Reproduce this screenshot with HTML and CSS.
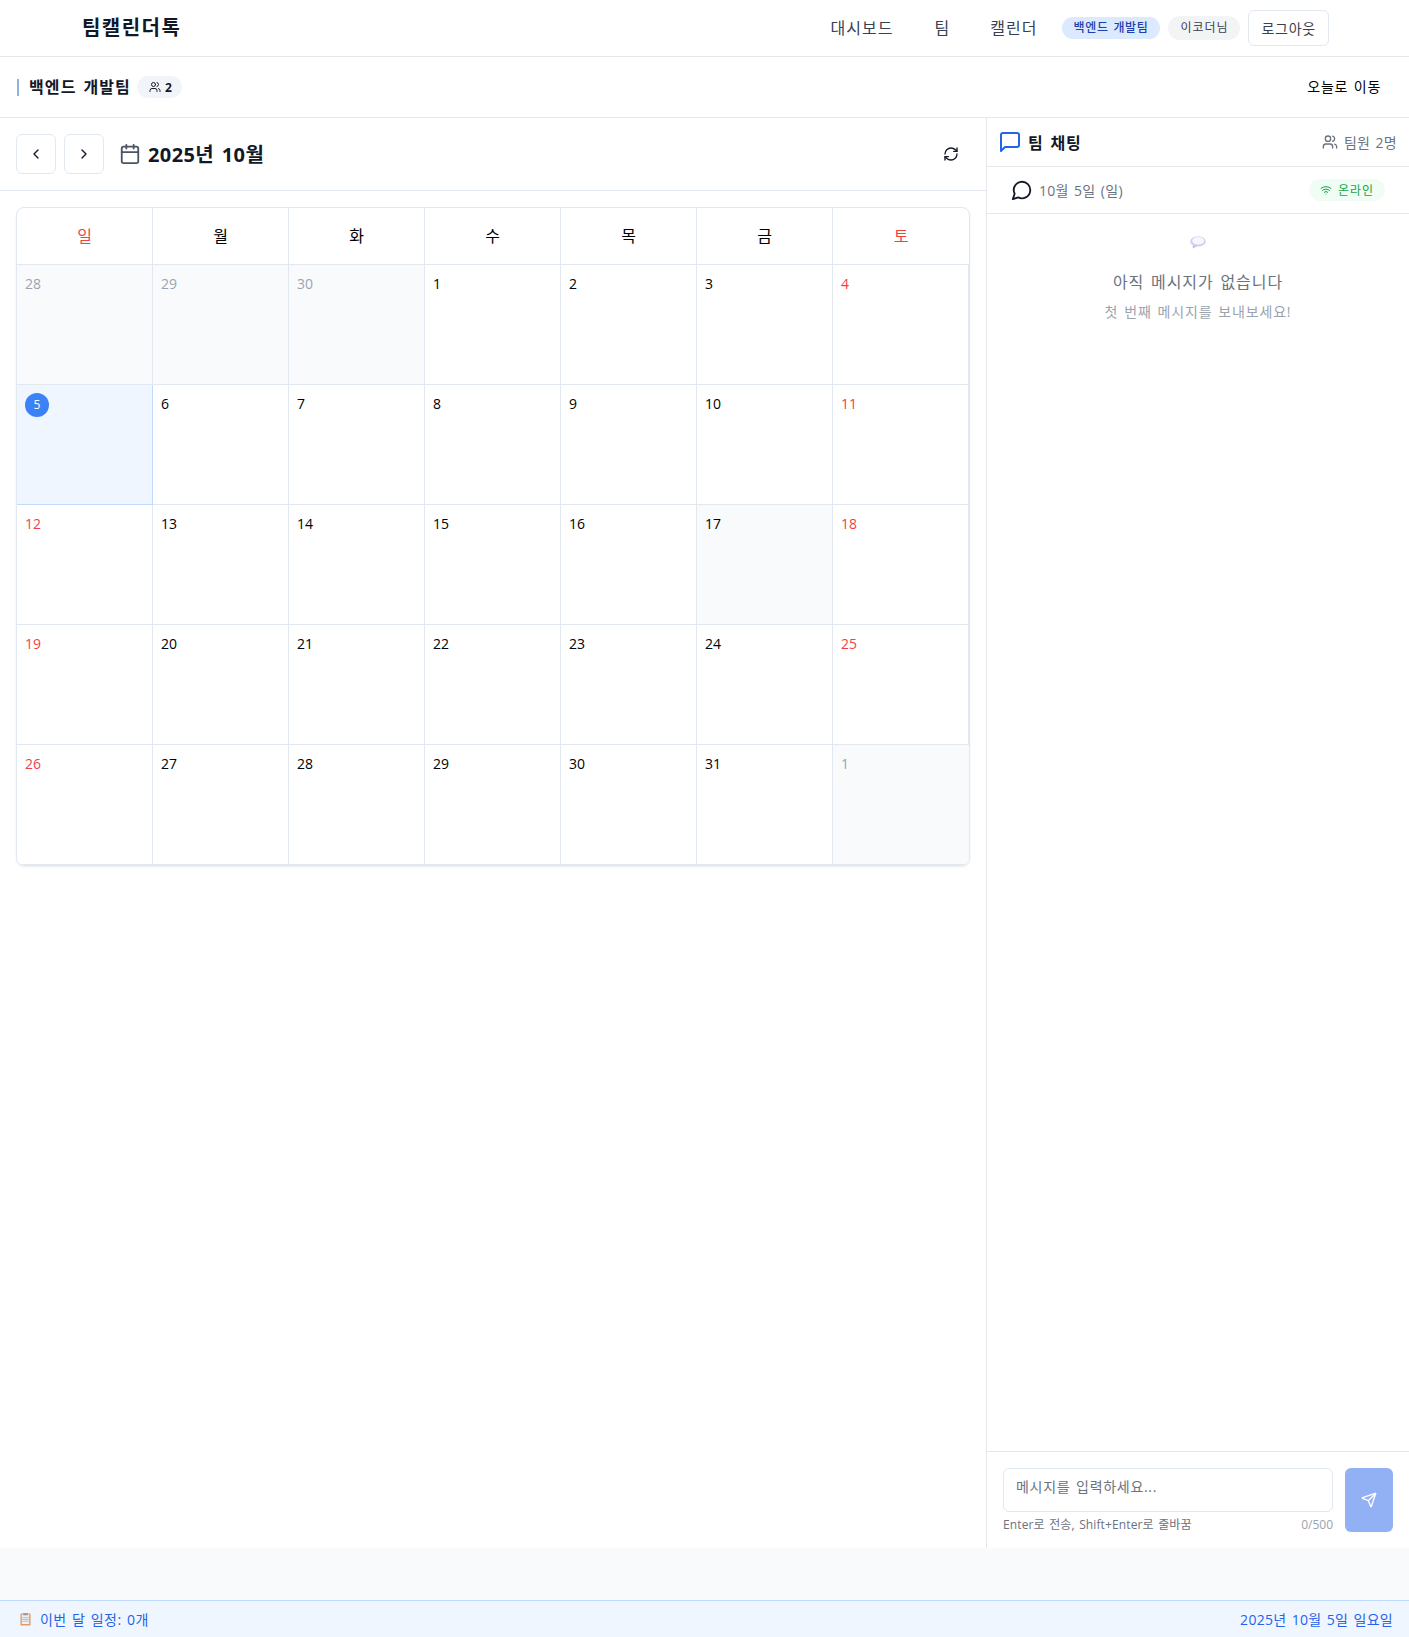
FILE: index.html
```html
<!DOCTYPE html>
<html lang="ko">
<head>
    <meta charset="UTF-8">
    <meta name="viewport" content="width=device-width, initial-scale=1.0">
    <title>팀캘린더톡</title>
    <link rel="stylesheet" href="styles.css">
</head>
<body>
    <header class="top-nav">
        <div class="logo">팀캘린더톡</div>
        <nav class="nav-links">
            <a class="nav-link">대시보드</a>
            <a class="nav-link">팀</a>
            <a class="nav-link">캘린더</a>
            <span class="team-pill">백엔드 개발팀</span>
            <span class="user-pill">이코더님</span>
            <button class="logout-btn">로그아웃</button>
        </nav>
    </header>

    <div class="team-bar">
        <div class="team-info">
            <span class="team-mark"></span>
            <span class="team-name">백엔드 개발팀</span>
            <span class="member-badge">
                <svg class="icon-12" viewBox="0 0 24 24"><path d="M16 21v-2a4 4 0 0 0-4-4H6a4 4 0 0 0-4 4v2"/><circle cx="9" cy="7" r="4"/><path d="M22 21v-2a4 4 0 0 0-3-3.87"/><path d="M16 3.13a4 4 0 0 1 0 7.75"/></svg>
                2
            </span>
        </div>
        <button class="today-btn">오늘로 이동</button>
    </div>

    <main class="content">
        <section class="calendar-pane">
            <div class="calendar-head">
                <button class="nav-btn"><svg class="icon-16" viewBox="0 0 24 24"><path d="m15 18-6-6 6-6"/></svg></button>
                <button class="nav-btn"><svg class="icon-16" viewBox="0 0 24 24"><path d="m9 18 6-6-6-6"/></svg></button>
                <svg class="icon-cal" viewBox="0 0 24 24"><path d="M8 2v4"/><path d="M16 2v4"/><rect x="3" y="4" width="18" height="18" rx="2"/><path d="M3 10h18"/></svg>
                <h2 class="month-title">2025년 10월</h2>
                <button class="refresh-btn"><svg class="icon-16" viewBox="0 0 24 24"><path d="M3 12a9 9 0 0 1 9-9 9.75 9.75 0 0 1 6.74 2.74L21 8"/><path d="M21 3v5h-5"/><path d="M21 12a9 9 0 0 1-9 9 9.75 9.75 0 0 1-6.74-2.74L3 16"/><path d="M8 16H3v5"/></svg></button>
            </div>
            <div class="calendar-wrap">
                <div class="calendar-grid" id="calendar-grid">
                    <div class="weekday sun">일</div>
                    <div class="weekday">월</div>
                    <div class="weekday">화</div>
                    <div class="weekday">수</div>
                    <div class="weekday">목</div>
                    <div class="weekday">금</div>
                    <div class="weekday sat">토</div>

                    <div class="day muted"><span class="num">28</span></div>
                    <div class="day muted"><span class="num">29</span></div>
                    <div class="day muted"><span class="num">30</span></div>
                    <div class="day"><span class="num">1</span></div>
                    <div class="day"><span class="num">2</span></div>
                    <div class="day"><span class="num">3</span></div>
                    <div class="day sat"><span class="num">4</span></div>

                    <div class="day today"><span class="num">5</span></div>
                    <div class="day"><span class="num">6</span></div>
                    <div class="day"><span class="num">7</span></div>
                    <div class="day"><span class="num">8</span></div>
                    <div class="day"><span class="num">9</span></div>
                    <div class="day"><span class="num">10</span></div>
                    <div class="day sat"><span class="num">11</span></div>

                    <div class="day sun"><span class="num">12</span></div>
                    <div class="day"><span class="num">13</span></div>
                    <div class="day"><span class="num">14</span></div>
                    <div class="day"><span class="num">15</span></div>
                    <div class="day"><span class="num">16</span></div>
                    <div class="day shaded"><span class="num">17</span></div>
                    <div class="day sat"><span class="num">18</span></div>

                    <div class="day sun"><span class="num">19</span></div>
                    <div class="day"><span class="num">20</span></div>
                    <div class="day"><span class="num">21</span></div>
                    <div class="day"><span class="num">22</span></div>
                    <div class="day"><span class="num">23</span></div>
                    <div class="day"><span class="num">24</span></div>
                    <div class="day sat"><span class="num">25</span></div>

                    <div class="day sun"><span class="num">26</span></div>
                    <div class="day"><span class="num">27</span></div>
                    <div class="day"><span class="num">28</span></div>
                    <div class="day"><span class="num">29</span></div>
                    <div class="day"><span class="num">30</span></div>
                    <div class="day"><span class="num">31</span></div>
                    <div class="day muted"><span class="num">1</span></div>
                </div>
            </div>
        </section>

        <aside class="chat-pane">
            <div class="chat-head">
                <div class="chat-title">
                    <svg class="icon-chat" viewBox="0 0 24 24"><path d="M21 15a2 2 0 0 1-2 2H7l-4 4V5a2 2 0 0 1 2-2h14a2 2 0 0 1 2 2z"/></svg>
                    <span>팀 채팅</span>
                </div>
                <div class="chat-members">
                    <svg class="icon-16" viewBox="0 0 24 24"><path d="M16 21v-2a4 4 0 0 0-4-4H6a4 4 0 0 0-4 4v2"/><circle cx="9" cy="7" r="4"/><path d="M22 21v-2a4 4 0 0 0-3-3.87"/><path d="M16 3.13a4 4 0 0 1 0 7.75"/></svg>
                    <span>팀원 2명</span>
                </div>
            </div>
            <div class="chat-date">
                <div class="chat-date-left">
                    <svg class="icon-bubble" viewBox="0 0 24 24"><path d="M7.9 20A9 9 0 1 0 4 16.1L2 22Z"/></svg>
                    <span>10월 5일 (일)</span>
                </div>
                <span class="online-pill">
                    <svg class="icon-12" viewBox="0 0 24 24"><path d="M12 20h.01"/><path d="M2 8.82a15 15 0 0 1 20 0"/><path d="M5 12.859a10 10 0 0 1 14 0"/><path d="M8.5 16.429a5 5 0 0 1 7 0"/></svg>
                    온라인
                </span>
            </div>
            <div class="chat-body">
                <svg class="bubble-emoji" viewBox="0 0 16 13"><path d="M3 8.5 2.6 12.6 7.5 10Z" fill="#c4b8e4"/><ellipse cx="8" cy="5.4" rx="7.8" ry="5.2" fill="#d6cdf0"/><ellipse cx="8.2" cy="4.8" rx="6" ry="3.7" fill="#f8f6fd"/></svg>
                <p class="empty-title">아직 메시지가 없습니다</p>
                <p class="empty-sub">첫 번째 메시지를 보내보세요!</p>
            </div>
            <div class="chat-input">
                <div class="input-col">
                    <textarea class="msg-box" placeholder="메시지를 입력하세요..."></textarea>
                    <div class="input-hints">
                        <span class="hint">Enter로 전송, Shift+Enter로 줄바꿈</span>
                        <span class="count">0/500</span>
                    </div>
                </div>
                <button class="send-btn"><svg class="icon-16" viewBox="0 0 24 24"><path d="M14.536 21.686a.5.5 0 0 0 .937-.024l6.5-19a.496.496 0 0 0-.635-.635l-19 6.5a.5.5 0 0 0-.024.937l7.93 3.18a2 2 0 0 1 1.112 1.11z"/><path d="m21.854 2.147-10.94 10.939"/></svg></button>
            </div>
        </aside>
    </main>

    <div class="page-gap"></div>

    <footer class="status-bar">
        <div class="status-left">
            <svg class="clipboard" viewBox="0 0 12 14"><rect x="0.5" y="1" width="11" height="13" rx="1" fill="#dd9a63"/><rect x="2" y="2" width="8" height="10.5" fill="#eef0f5"/><rect x="3.5" y="0.5" width="5" height="2.5" fill="#9a9aa8"/><path d="M3 5.5h6M3 7.5h6M3 9.5h6" stroke="#b6b8c6" stroke-width="1"/></svg>
            <span>이번 달 일정: 0개</span>
        </div>
        <span class="status-date">2025년 10월 5일 일요일</span>
    </footer>
</body>
</html>
```

FILE: styles.css
```css
* {
    box-sizing: border-box;
    word-spacing: 0.1em;
}

body {
    margin: 0;
    height: 100vh;
    display: flex;
    flex-direction: column;
    background: #f9fafb;
    color: #000;
    font-family: "Open Sans", "Noto Sans CJK KR", sans-serif;
    font-size: 14px;
}

button {
    font-family: inherit;
    background: #fff;
    cursor: pointer;
}

svg {
    fill: none;
    stroke: currentColor;
    stroke-width: 2;
    stroke-linecap: round;
    stroke-linejoin: round;
    flex-shrink: 0;
    display: block;
}

.icon-12 { width: 12px; height: 12px; }
.icon-16 { width: 16px; height: 16px; }

/* top nav */
.top-nav {
    height: 57px;
    flex-shrink: 0;
    display: flex;
    align-items: center;
    justify-content: space-between;
    padding: 0 80px 0 82px;
    background: #fff;
    border-bottom: 1px solid #e5e7eb;
}

.logo {
    font-size: 20px;
    font-weight: 700;
    letter-spacing: 0.073em;
    color: #111827;
    padding-bottom: 3px;
}

.nav-links {
    display: flex;
    align-items: center;
}

.nav-link {
    font-size: 16px;
    letter-spacing: 0.065em;
    color: #374151;
    margin-right: 41px;
    padding-bottom: 2px;
}

.nav-link:nth-child(2) {
    margin-right: 40px;
}

.nav-link:nth-child(3) {
    margin-right: 24px;
}

.team-pill {
    height: 22px;
    padding: 0 12px;
    border-radius: 11px;
    background: #dbeafe;
    color: #1e40af;
    font-size: 12px;
    font-weight: 500;
    letter-spacing: 0.05em;
    line-height: 22px;
    margin-right: 8px;
}

.user-pill {
    height: 24px;
    padding: 0 12px;
    border-radius: 12px;
    background: #f3f4f6;
    color: #374151;
    font-size: 12px;
    letter-spacing: 0.08em;
    line-height: 24px;
    margin-right: 8px;
}

.logout-btn {
    height: 36px;
    padding: 0 12px;
    border: 1px solid #e2e8f0;
    border-radius: 6px;
    color: #374151;
    font-size: 14px;
    letter-spacing: 0.055em;
}

/* team bar */
.team-bar {
    height: 61px;
    flex-shrink: 0;
    display: flex;
    align-items: center;
    justify-content: space-between;
    padding: 0 28px 0 17px;
    background: #fff;
    border-bottom: 1px solid #e5e7eb;
}

.team-info {
    display: flex;
    align-items: center;
}

.team-mark {
    width: 2px;
    height: 17px;
    background: linear-gradient(to right, #c9a98c 50%, #8fb0e0 50%);
    margin-right: 10px;
}

.team-name {
    font-size: 16px;
    font-weight: 700;
    letter-spacing: 0.07em;
    color: #111827;
    margin-right: 6px;
    padding-bottom: 2px;
}

.member-badge {
    display: flex;
    align-items: center;
    gap: 4px;
    height: 22px;
    padding: 0 10px 0 12px;
    border-radius: 11px;
    background: #f1f5f9;
    font-size: 12px;
    font-weight: 700;
    color: #111827;
}

.today-btn {
    border: 0;
    padding: 0 0 2px;
    font-size: 14px;
    letter-spacing: 0.05em;
    color: #000;
}

/* main area */
.content {
    height: 1430px;
    flex-shrink: 0;
    display: flex;
    background: #fff;
}

.calendar-pane {
    flex: 1;
    min-width: 0;
}

.calendar-head {
    height: 73px;
    display: flex;
    align-items: center;
    padding: 0 27px 0 16px;
    border-bottom: 1px solid #e2e8f0;
}

.nav-btn {
    width: 40px;
    height: 40px;
    display: flex;
    align-items: center;
    justify-content: center;
    padding: 0;
    margin-right: 8px;
    border: 1px solid #e2e8f0;
    border-radius: 6px;
    color: #111827;
}

.icon-cal {
    width: 22px;
    height: 22px;
    margin: 0 7px;
    color: #4b5563;
}

.month-title {
    margin: 0;
    padding-bottom: 2px;
    font-size: 20px;
    font-weight: 700;
    letter-spacing: 0.02em;
    color: #111827;
}

.refresh-btn {
    margin-left: auto;
    border: 0;
    padding: 0;
    color: #111827;
}

.calendar-wrap {
    padding: 16px 16px 0;
}

.calendar-grid {
    display: grid;
    grid-template-columns: repeat(7, 136px);
    grid-template-rows: 57px repeat(5, 120px);
    width: 954px;
    border: 1px solid #e2e8f0;
    border-radius: 8px;
    box-shadow: 0 1px 2px rgba(0, 0, 0, 0.08);
    overflow: hidden;
}

.weekday {
    display: flex;
    align-items: center;
    justify-content: center;
    padding-bottom: 2px;
    font-size: 16px;
    border-right: 1px solid #e2e8f0;
    border-bottom: 1px solid #e2e8f0;
}

.weekday.sun { color: #ef4444; }
.weekday.sat { color: #f43f3f; border-right: 0; }

.day {
    padding: 8px;
    border-right: 1px solid #e2e8f0;
    border-bottom: 1px solid #e2e8f0;
    font-size: 14px;
    line-height: 22px;
}

.day:last-child {
    border-right: 0;
}

.day.sun { color: #ef4444; }
.day.sat { color: #f43f3f; }
.day.muted { background: #f9fafb; color: #9ca3af; }
.day.shaded { background: #f9fafb; }

.day.today {
    background: #eff6ff;
    border-color: #bfdbfe;
}

.day.today .num {
    display: flex;
    align-items: center;
    justify-content: center;
    width: 24px;
    height: 24px;
    border-radius: 50%;
    background: #3b82f6;
    color: #fff;
    font-size: 12px;
}

/* chat */
.chat-pane {
    width: 423px;
    flex-shrink: 0;
    display: flex;
    flex-direction: column;
    border-left: 1px solid #e5e7eb;
}

.chat-head {
    height: 49px;
    display: flex;
    align-items: center;
    justify-content: space-between;
    padding: 0 12px 0 11px;
    border-bottom: 1px solid #e5e7eb;
}

.chat-title {
    display: flex;
    align-items: center;
    gap: 6px;
    font-size: 16px;
    font-weight: 700;
    letter-spacing: 0.06em;
    color: #111827;
}

.chat-title span {
    padding-bottom: 1px;
}

.icon-chat {
    width: 24px;
    height: 24px;
    color: #2563eb;
}

.chat-members {
    display: flex;
    align-items: center;
    gap: 6px;
    color: #6b7280;
    font-size: 14px;
    letter-spacing: 0.02em;
}

.chat-date {
    height: 47px;
    display: flex;
    align-items: center;
    justify-content: space-between;
    padding: 0 24px;
    border-bottom: 1px solid #e5e7eb;
}

.chat-date-left {
    display: flex;
    align-items: center;
    gap: 6px;
    color: #6b7280;
    font-size: 14px;
    letter-spacing: 0.02em;
}

.icon-bubble {
    width: 22px;
    height: 22px;
    color: #111827;
}

.online-pill {
    display: flex;
    align-items: center;
    gap: 6px;
    height: 22px;
    padding: 0 11px;
    border-radius: 11px;
    background: #f0fdf4;
    color: #16a34a;
    font-size: 12px;
    letter-spacing: 0.08em;
}

.chat-body {
    flex: 1;
    display: flex;
    flex-direction: column;
    align-items: center;
    padding-top: 22px;
}

.bubble-emoji {
    width: 16px;
    height: 13px;
    stroke: none;
}

.empty-title {
    margin: 21px 0 0;
    font-size: 16px;
    line-height: 24px;
    letter-spacing: 0.06em;
    color: #6b7280;
}

.empty-sub {
    margin: 8px 0 0;
    font-size: 14px;
    line-height: 20px;
    letter-spacing: 0.06em;
    color: #9ca3af;
}

.chat-input {
    height: 97px;
    display: flex;
    gap: 12px;
    padding: 16px 16px 0;
    border-top: 1px solid #e5e7eb;
}

.input-col {
    flex: 1;
    min-width: 0;
}

.msg-box {
    display: block;
    width: 100%;
    height: 44px;
    padding: 8px 12px;
    border: 1px solid #e2e8f0;
    border-radius: 6px;
    font-family: inherit;
    font-size: 14px;
    letter-spacing: 0.05em;
    line-height: 20px;
    resize: none;
    outline: none;
}

.msg-box::placeholder {
    color: #6b7280;
    opacity: 1;
}

.input-hints {
    display: flex;
    justify-content: space-between;
    margin-top: 5px;
    font-size: 12px;
    line-height: 16px;
    color: #6b7280;
}

.hint {
    letter-spacing: 0.01em;
}

.count {
    color: #9ca3af;
}

.send-btn {
    width: 48px;
    height: 64px;
    display: flex;
    align-items: center;
    justify-content: center;
    padding: 0;
    border: 0;
    border-radius: 6px;
    background: #92b1f5;
    color: #fff;
}

/* bottom */
.page-gap {
    flex: 1;
}

.status-bar {
    height: 37px;
    flex-shrink: 0;
    display: flex;
    align-items: center;
    justify-content: space-between;
    padding: 0 16px 0 20px;
    background: #eff6ff;
    border-top: 1px solid #bfdbfe;
    color: #2563eb;
    font-size: 14px;
    letter-spacing: 0.03em;
}

.status-date {
    letter-spacing: 0.02em;
}

.status-left {
    display: flex;
    align-items: center;
    gap: 9px;
}

.clipboard {
    width: 11px;
    height: 14px;
    stroke: none;
}
```
